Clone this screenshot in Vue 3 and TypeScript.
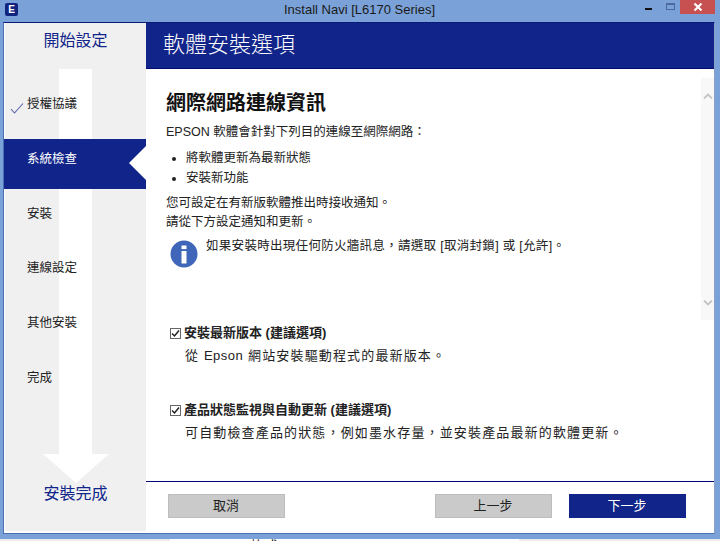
<script setup lang="ts">
interface Step {
  label: string;
  done?: boolean;
  active?: boolean;
}

const steps: Step[] = [
  { label: '授權協議', done: true },
  { label: '系統檢查', active: true },
  { label: '安裝' },
  { label: '連線設定' },
  { label: '其他安裝' },
  { label: '完成' },
];
</script>

<template>
  <div class="window">
    <header class="titlebar">
      <span class="titlebar__logo">E</span>
      <span class="titlebar__title">Install Navi [L6170 Series]</span>
      <div class="titlebar__controls">
        <span class="titlebar__min"></span>
        <span class="titlebar__max"></span>
        <span class="titlebar__close">
          <svg width="10" height="10" viewBox="0 0 10 10">
            <path d="M1.5 1.5 L8.5 8.5 M8.5 1.5 L1.5 8.5" stroke="#fff" stroke-width="2.2" />
          </svg>
        </span>
      </div>
    </header>

    <div class="client">
      <aside class="sidebar">
        <div class="sidebar__arrow">
          <div class="sidebar__shaft"></div>
          <div class="sidebar__head"></div>
        </div>
        <div class="sidebar__start">開始設定</div>
        <ul class="steps">
          <li
            v-for="step in steps"
            :key="step.label"
            class="steps__item"
            :class="{ 'steps__item--active': step.active }"
          >
            <svg v-if="step.done" class="steps__check" width="14" height="12" viewBox="0 0 14 12">
              <path d="M1 7 L4.5 11 L13 1.5" fill="none" stroke="#5a62a8" stroke-width="1.1" />
            </svg>
            <span>{{ step.label }}</span>
            <span v-if="step.active" class="steps__notch"></span>
          </li>
        </ul>
        <div class="sidebar__end">安裝完成</div>
      </aside>

      <main class="main">
        <div class="banner">軟體安裝選項</div>
        <div class="content">
          <h1 class="content__title">網際網路連線資訊</h1>
          <p class="content__line content__line--intro">EPSON 軟體會針對下列目的連線至網際網路：</p>
          <ul class="bullets">
            <li>將軟體更新為最新狀態</li>
            <li>安裝新功能</li>
          </ul>
          <p class="content__line">您可設定在有新版軟體推出時接收通知。</p>
          <p class="content__line">請從下方設定通知和更新。</p>
          <div class="notice">
            <svg class="notice__icon" width="28" height="28" viewBox="0 0 28 28">
              <circle cx="14" cy="14" r="13.5" fill="#3f66b8" />
              <rect x="11.5" y="11" width="5" height="12.5" fill="#fff" />
              <rect x="11.5" y="5.5" width="5" height="3.6" fill="#fff" />
            </svg>
            <span>如果安裝時出現任何防火牆訊息，請選取 [取消封鎖] 或 [允許]。</span>
          </div>

          <div class="scroll">
            <svg width="10" height="6" viewBox="0 0 10 6">
              <path d="M1 5.5 L5 1.5 L9 5.5" fill="none" stroke="#c4c4c4" stroke-width="1.8" />
            </svg>
            <svg width="10" height="6" viewBox="0 0 10 6">
              <path d="M1 .5 L5 4.5 L9 .5" fill="none" stroke="#c4c4c4" stroke-width="1.8" />
            </svg>
          </div>

          <section class="option option--first">
            <div class="option__head">
              <span class="checkbox">
                <svg width="9" height="9" viewBox="0 0 9 9">
                  <path d="M1 4.5 L3.5 7 L8 1.5" fill="none" stroke="#222" stroke-width="1.5" />
                </svg>
              </span>
              <strong>安裝最新版本 (建議選項)</strong>
            </div>
            <p class="option__desc">從 <span class="option__latin">Epson</span> 網站安裝驅動程式的最新版本。</p>
          </section>

          <section class="option">
            <div class="option__head">
              <span class="checkbox">
                <svg width="9" height="9" viewBox="0 0 9 9">
                  <path d="M1 4.5 L3.5 7 L8 1.5" fill="none" stroke="#222" stroke-width="1.5" />
                </svg>
              </span>
              <strong>產品狀態監視與自動更新 (建議選項)</strong>
            </div>
            <p class="option__desc">可自動檢查產品的狀態，例如墨水存量，並安裝產品最新的軟體更新。</p>
          </section>
        </div>

        <footer class="footer">
          <button type="button" class="btn">取消</button>
          <div class="footer__nav">
            <button type="button" class="btn">上一步</button>
            <button type="button" class="btn btn--primary">下一步</button>
          </div>
        </footer>
      </main>
    </div>
    <div class="below">
      <div class="below__page">格式</div>
    </div>
  </div>
</template>

<style scoped>
.window {
  width: 720px;
  height: 541px;
  display: flex;
  flex-direction: column;
  background: #7ba2d8;
  overflow: hidden;
  font-family: "Liberation Sans", "Noto Sans CJK TC", sans-serif;
  color: #222;
}

.titlebar {
  height: 22px;
  display: flex;
  align-items: center;
  padding-left: 5px;
  position: relative;
  flex-shrink: 0;
}

.titlebar__logo {
  width: 13px;
  height: 13px;
  margin-top: -4px;
  background: #11247f;
  color: #fff;
  font-size: 10px;
  font-weight: 700;
  line-height: 13px;
  text-align: center;
  border-radius: 2px;
}

.titlebar__title {
  position: absolute;
  left: 0;
  right: 1px;
  top: 2px;
  text-align: center;
  font-size: 13px;
  line-height: 16px;
  color: #1a1a1a;
}

.titlebar__controls {
  position: absolute;
  top: 0;
  right: 5px;
  display: flex;
  align-items: flex-start;
}

.titlebar__min {
  width: 7px;
  height: 2px;
  margin: 8px 14px 0 0;
  background: #111;
}

.titlebar__max {
  width: 7px;
  height: 4px;
  margin: 3px 5px 0 0;
  border: 1px solid #4a6a9f;
  border-top-width: 2px;
}

.titlebar__close {
  width: 35px;
  height: 14px;
  background: #c75050;
  display: flex;
  align-items: center;
  justify-content: center;
}

.client {
  height: 510px;
  margin: 0 5px 0 3px;
  display: flex;
  background: #fff;
  border: 1px solid #4a70b4;
  border-top-color: #0a1a78;
  border-right-color: #8aa0c8;
  flex-shrink: 0;
}

.sidebar {
  position: relative;
  width: 141px;
  margin: 0 0 2px 1px;
  flex-shrink: 0;
  background: #f0f0f0;
  display: flex;
  flex-direction: column;
}

.sidebar__arrow {
  position: absolute;
  left: 38px;
  top: 46px;
  width: 65px;
  display: flex;
  flex-direction: column;
  align-items: center;
}

.sidebar__shaft {
  width: 33px;
  height: 385px;
  background: #fff;
}

.sidebar__head {
  width: 0;
  height: 0;
  border-left: 33px solid transparent;
  border-right: 33px solid transparent;
  border-top: 29px solid #fff;
}

.sidebar__start,
.sidebar__end {
  position: relative;
  text-align: center;
  color: #11248a;
  font-size: 16px;
  line-height: 20px;
}

.sidebar__start {
  margin-top: 8px;
}

.sidebar__end {
  margin-top: 60px;
}

.steps {
  position: relative;
  list-style: none;
  margin: 44px 0 0;
  padding: 0;
}

.steps__item {
  position: relative;
  height: 54.8px;
  padding-left: 22px;
  font-size: 12.5px;
  line-height: 18px;
  color: #222;
}

.steps__item--active {
  box-sizing: border-box;
  height: 50px;
  margin: -10.8px 0 15.6px -1px;
  padding-top: 10.8px;
  padding-left: 23px;
  background: #11248a;
  color: #fff;
}

.steps__check {
  position: absolute;
  left: 5px;
  top: 7px;
}

.steps__notch {
  position: absolute;
  right: 0;
  top: 7px;
  width: 0;
  height: 0;
  border-top: 17px solid transparent;
  border-bottom: 17px solid transparent;
  border-right: 17px solid #fff;
}

.main {
  flex: 1;
  min-width: 0;
  display: flex;
  flex-direction: column;
}

.banner {
  height: 45px;
  padding-left: 17px;
  background: #11248a;
  border-bottom: 1px solid #000a70;
  color: #fff;
  font-size: 22px;
  font-weight: 300;
  line-height: 44px;
  flex-shrink: 0;
}

.content {
  position: relative;
  flex: 1;
  padding: 22px 20px 0;
  font-size: 12.5px;
}

.content__title {
  margin: 0;
  font-size: 20px;
  line-height: 24px;
  font-weight: 700;
  color: #111;
}

.content__line {
  margin: 0;
  line-height: 19px;
}

.content__line--intro {
  margin-top: 8px;
}

.bullets {
  margin: 6px 0;
  padding: 0 0 0 20px;
  line-height: 20px;
}

.notice {
  display: flex;
  align-items: flex-start;
  gap: 8px;
  margin-top: 5px;
  padding-left: 4px;
  line-height: 18px;
  letter-spacing: 0.3px;
}

.notice__icon {
  flex-shrink: 0;
  margin-top: 3px;
}

.scroll {
  position: absolute;
  top: 9px;
  right: 0;
  width: 13px;
  height: 242px;
  padding: 15px 0 14px;
  box-sizing: border-box;
  background: #f8f8f8;
  display: flex;
  flex-direction: column;
  justify-content: space-between;
  align-items: center;
}

.option {
  font-size: 13px;
}

.option--first {
  margin-top: 56px;
}

.option + .option {
  margin-top: 36px;
}

.option__head {
  display: flex;
  align-items: center;
  gap: 3px;
  padding-left: 4px;
  line-height: 18px;
}

.option__desc {
  margin: 5px 0 0;
  padding-left: 19px;
  line-height: 18px;
  letter-spacing: 1.15px;
}

.option__latin {
  letter-spacing: 0.5px;
}

.checkbox {
  width: 9px;
  height: 9px;
  border: 1px solid #666;
  display: flex;
  align-items: center;
  justify-content: center;
  background: #fff;
}

.footer {
  box-sizing: border-box;
  height: 52px;
  border-top: 1px solid #000a70;
  padding: 12px 28px 0 22px;
  display: flex;
  align-items: flex-start;
  justify-content: space-between;
  flex-shrink: 0;
}

.footer__nav {
  display: flex;
  gap: 17px;
}

.btn {
  width: 117px;
  height: 24px;
  padding: 0 1px 3px 0;
  border: 1px solid #bdbdbd;
  background: #cacaca;
  font: inherit;
  font-size: 13px;
  color: #222;
}

.btn--primary {
  background: #11248a;
  border-color: #11248a;
  color: #fff;
}

.below {
  height: 2px;
  margin-top: 5px;
  background: #ececec;
  overflow: hidden;
  flex-shrink: 0;
}

.below__page {
  width: 269px;
  height: 2px;
  margin-left: 170px;
  padding-left: 80px;
  background: #fff;
  font-size: 14px;
  line-height: 14px;
  color: #222;
}
</style>

<style>
html,
body {
  margin: 0;
}
</style>
